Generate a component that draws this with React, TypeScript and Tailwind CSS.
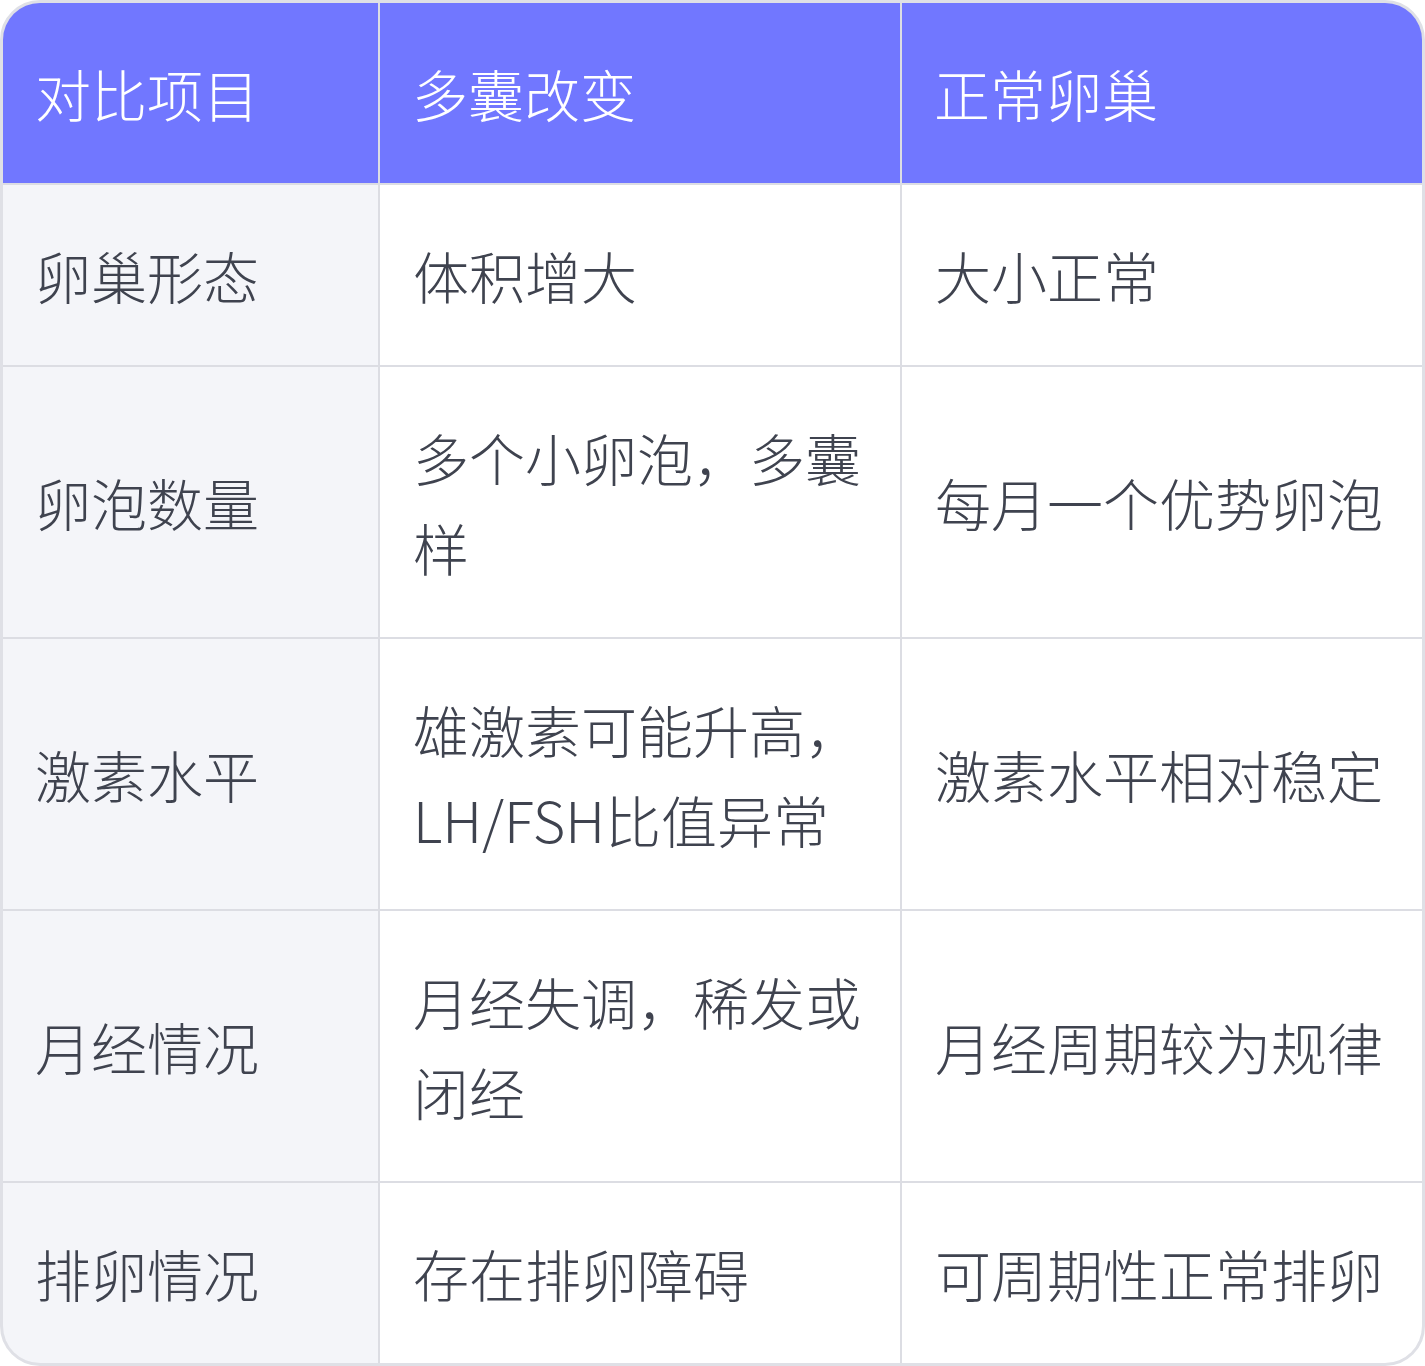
import { Fragment } from 'react'

const rows: [string, string, string][] = [
  ['卵巢形态', '体积增大', '大小正常'],
  ['卵泡数量', '多个小卵泡，多囊样', '每月一个优势卵泡'],
  ['激素水平', '雄激素可能升高，LH/FSH比值异常', '激素水平相对稳定'],
  ['月经情况', '月经失调，稀发或闭经', '月经周期较为规律'],
  ['排卵情况', '存在排卵障碍', '可周期性正常排卵'],
]

const headers = ['对比项目', '多囊改变', '正常卵巢']

export default function App() {
  return (
    <div
      className="w-[1425px] h-[1366px] bg-white"
      style={{ fontFamily: '"Noto Sans CJK SC", "Noto Sans", sans-serif' }}
    >
      <div className="overflow-hidden rounded-[40px] border-[3px] border-[#dfe0e6] bg-[#dcdde3]">
        <div className="grid grid-cols-[375px_520px_520px] gap-[2px] text-[56px] font-light leading-[90px]">
          {headers.map((h) => (
            <div key={h} className="bg-[#7177ff] py-[45px] pl-[32px] pr-[30px] text-white">
              {h}
            </div>
          ))}
          {rows.map((r) => (
            <Fragment key={r[0]}>
              <div className="flex items-center bg-[#f4f5f9] py-[45px] pl-[32px] pr-[30px] text-[#3f434f]">
                {r[0]}
              </div>
              <div className="flex items-center bg-white py-[45px] pl-[33px] pr-[30px] text-[#3f434f]">
                {r[1]}
              </div>
              <div className="flex items-center bg-white py-[45px] pl-[33px] pr-[30px] text-[#3f434f]">
                {r[2]}
              </div>
            </Fragment>
          ))}
        </div>
      </div>
    </div>
  )
}
